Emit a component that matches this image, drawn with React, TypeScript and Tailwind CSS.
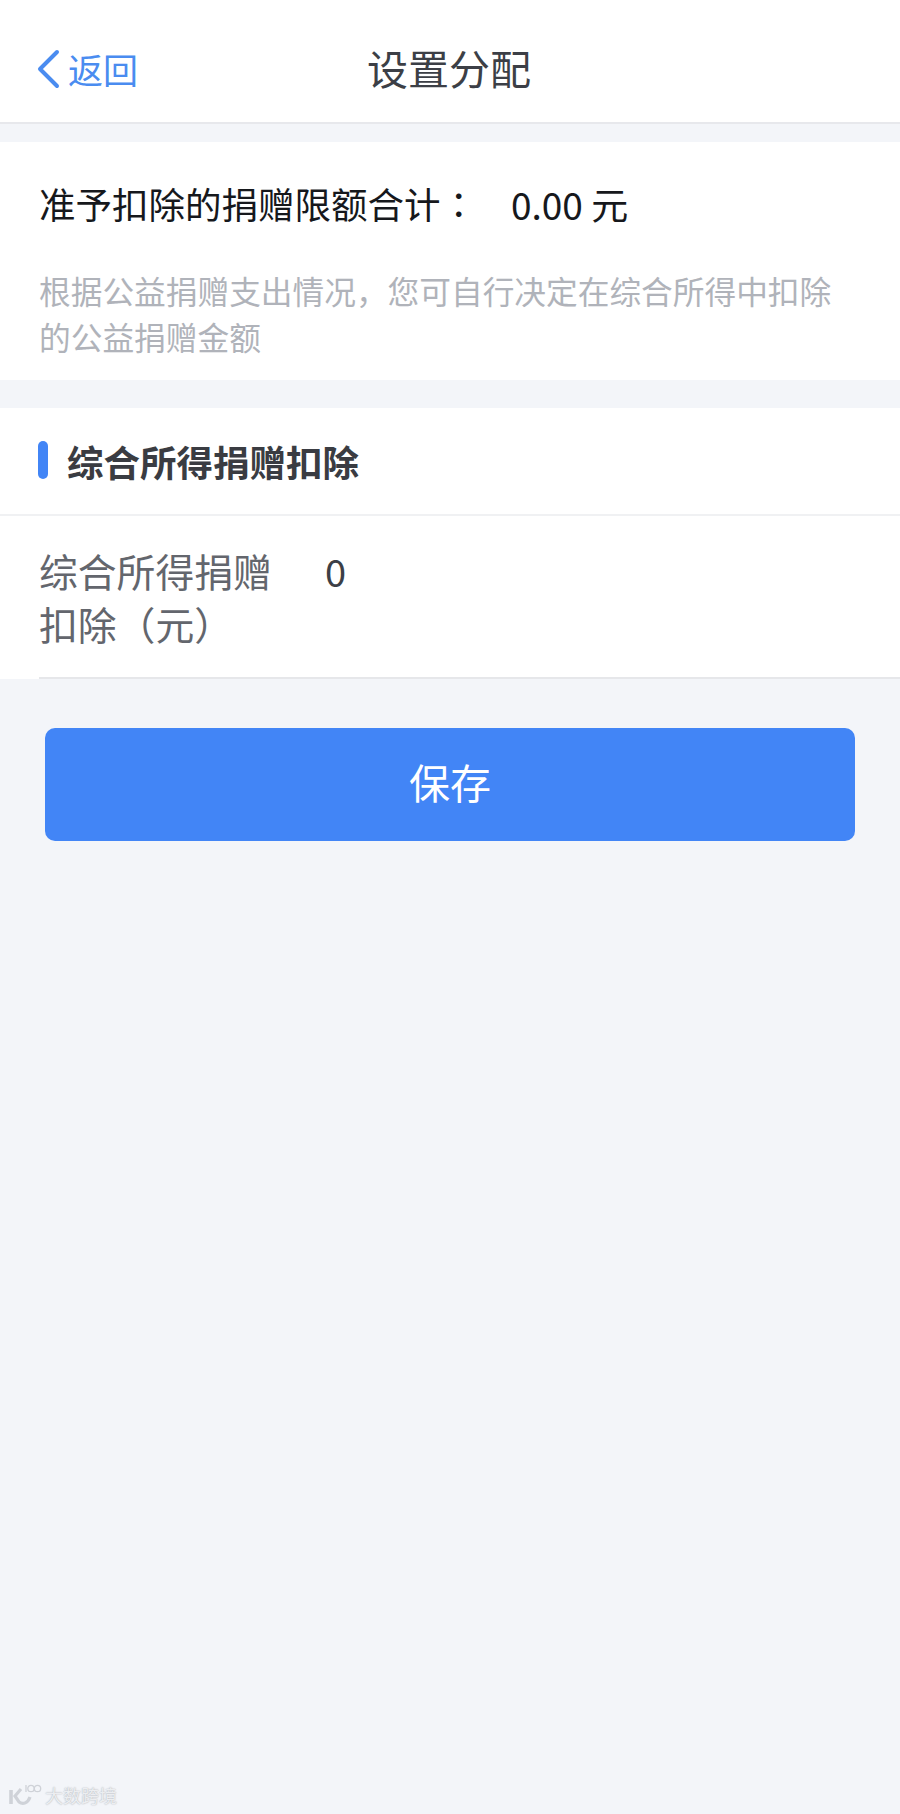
const cjk = "font-['PingFang_SC','Noto_Sans_CJK_SC',sans-serif]"

function Watermark() {
  return (
    <div className="absolute bottom-[7px] left-[8px] flex items-center gap-[3px]">
      <svg width="34" height="24" viewBox="0 0 34 24" fill="none" stroke="#cfd2d8">
        <path d="M3 7v14" strokeWidth="3.6" />
        <path d="M13 6 7 13l4 6c4 3 9 1 11-5" strokeWidth="3.2" />
        <path d="M18 2v7" strokeWidth="1.3" />
        <circle cx="23" cy="5.5" r="3.2" strokeWidth="1.3" />
        <circle cx="29.5" cy="5.5" r="3.2" strokeWidth="1.3" />
      </svg>
      <span className="text-[18px] leading-[24px] text-[#eceef1] [text-shadow:0_0_1.5px_#9ea2a9]">大数跨境</span>
    </div>
  )
}

export default function App() {
  return (
    <div className={`relative flex h-[1814px] w-[900px] flex-col overflow-hidden bg-[#f3f5f9] ${cjk}`}>
      <header className="relative flex h-[124px] shrink-0 items-center justify-center border-b-2 border-[#e7e8ec] bg-white pt-[14px] pr-[2px] pb-[2px]">
        <div className="absolute left-[36px] top-[49px] flex items-center gap-[8px] text-[#4a8cf0]">
          <svg width="24" height="40" viewBox="0 0 24 40" fill="none" stroke="currentColor" strokeWidth="4" strokeLinecap="round" strokeLinejoin="round">
            <path d="M21 3 4 20l17 17" />
          </svg>
          <span className="text-[35px] leading-[40px]">返回</span>
        </div>
        <h1 className="text-[41px] leading-[50px] font-normal text-[#3c3f46]">设置分配</h1>
      </header>

      <section className="mt-[18px] h-[238px] bg-white px-[39px] pt-[37px]">
        <div className="flex items-center text-[36.5px] leading-[50px] text-[#16181c]">
          <span>准予扣除的捐赠限额合计</span>
          <span className="font-['Noto_Sans_CJK_TC',sans-serif]">：</span>
          <span className="ml-[34px] text-[37px]">0.00 元</span>
        </div>
        <p className="mt-[38px] w-[810px] text-[31.7px] leading-[46px] text-[#b0b3ba]">
          根据公益捐赠支出情况，您可自行决定在综合所得中扣除的公益捐赠金额
        </p>
      </section>

      <section className="mt-[28px] bg-white">
        <div className="flex h-[108px] items-center gap-[19px] border-b-2 border-[#f0f1f3] pl-[38px] pb-[2px]">
          <span className="h-[38px] w-[10px] rounded-full bg-[#4285f6]" />
          <h2 className="pt-[4px] text-[36.5px] leading-[50px] font-bold text-[#3a3c42]">综合所得捐赠扣除</h2>
        </div>
        <div className="ml-[39px] flex h-[163px] border-b-2 border-[#e6e7ea] pt-[28px]">
          <label className="w-[248px] text-[38.8px] leading-[53px] text-[#63666d]">综合所得捐赠扣除（元）</label>
          <span className="ml-[38px] text-[38px] leading-[53px] text-[#3c3f46]">0</span>
        </div>
      </section>

      <button className="mx-[45px] mt-[49px] flex h-[113px] items-center justify-center rounded-[10px] bg-[#4285f6] pb-[6px] text-[41px] text-white">
        保存
      </button>

      <Watermark />
    </div>
  )
}
